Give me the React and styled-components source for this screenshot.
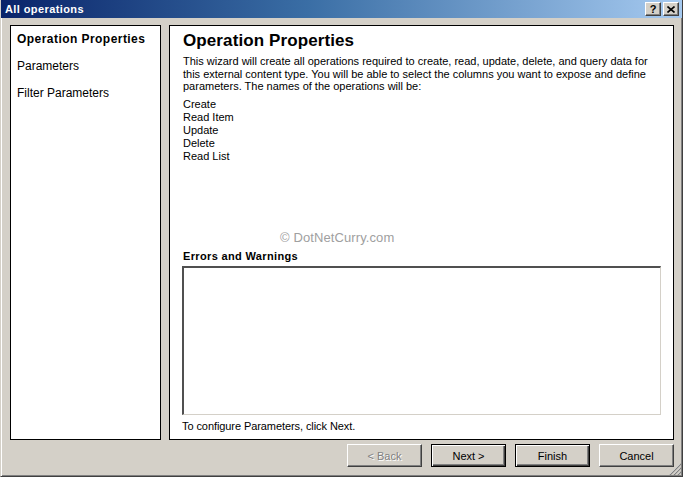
import React from "react";
import styled, { createGlobalStyle, css } from "styled-components";

const Global = createGlobalStyle`
  html, body { margin: 0; padding: 0; background: #d4d0c8; }
  body { font-family: "Liberation Sans", Arial, sans-serif; font-size: 11px; color: #000; }
  * { box-sizing: border-box; }
`;

const Window = styled.div`
  width: 683px;
  height: 477px;
  background: #d4d0c8;
  display: flex;
  flex-direction: column;
  border-left: 1px solid #d4d0c8;
  border-bottom: 1px solid #404040;
  border-right: 1px solid #404040;
  box-shadow: inset 1px 0 0 #ffffff, inset 0 -1px 0 #808080, inset -1px 0 0 #808080;
  position: relative;
  overflow: hidden;
`;

const TitleBar = styled.div`
  height: 18px;
  display: flex;
  align-items: center;
  padding: 0 3px 0 4px;
  background: linear-gradient(to right, #0a246a 0%, #3a6ea5 45%, #a6caf0 100%);
  flex-shrink: 0;
`;

const Title = styled.div`
  flex: 1;
  color: #fff;
  font-weight: bold;
  font-size: 11px;
  letter-spacing: 0.4px;
  font-family: "Liberation Sans", Arial, sans-serif;
`;

const CaptionButton = styled.div`
  width: 16px;
  height: 14px;
  margin-left: 2px;
  background: #d4d0c8;
  border-top: 1px solid #fff;
  border-left: 1px solid #fff;
  border-right: 1px solid #404040;
  border-bottom: 1px solid #404040;
  box-shadow: inset -1px -1px 0 #808080;
  display: flex;
  align-items: center;
  justify-content: center;
  font-weight: bold;
  font-size: 11px;
  line-height: 1;
`;

const Body = styled.div`
  display: flex;
  gap: 8px;
  padding: 7px 8px 0 9px;
  height: 422px;
  flex-shrink: 0;
`;

const NavPanel = styled.div`
  width: 151px;
  background: #fff;
  border: 1px solid #000;
  padding: 6px 0 0 6px;
  display: flex;
  flex-direction: column;
  gap: 13px;
`;

const NavItem = styled.div`
  font-family: "Liberation Sans", Arial, sans-serif;
  font-size: 12px;
  line-height: 14px;
  ${(p) =>
    p.$active &&
    css`
      font-weight: bold;
      letter-spacing: 0.45px;
    `}
`;

const Content = styled.div`
  flex: 1;
  background: #fff;
  border: 1px solid #000;
  padding: 5px 12px 0 12px;
  display: flex;
  flex-direction: column;
`;

const Heading = styled.div`
  font-weight: bold;
  font-size: 17px;
  line-height: 20px;
  margin-left: 1px;
  letter-spacing: 0.1px;
`;

const Para = styled.div`
  font-size: 11px;
  line-height: 12.5px;
  margin: 4px 0 0 1px;
  white-space: nowrap;
`;

const OpList = styled.div`
  margin-top: 5px;
  margin-left: 1px;
  font-size: 11px;
  line-height: 13px;
`;

const Spacer = styled.div`
  flex: 1;
  display: flex;
  align-items: flex-end;
  justify-content: flex-start;
  padding-left: 98px;
  padding-bottom: 5px;
`;

const Watermark = styled.div`
  color: #a0a0a0;
  font-size: 13px;
  line-height: 15px;
  letter-spacing: 0.1px;
`;

const SectionLabel = styled.div`
  font-weight: bold;
  font-size: 11px;
  line-height: 13px;
  margin-left: 1px;
  letter-spacing: 0.35px;
`;

const TextBox = styled.div`
  height: 149px;
  margin-top: 3px;
  background: #fff;
  border-top: 2px solid #505050;
  border-left: 2px solid #505050;
  border-right: 1px solid #d4d0c8;
  border-bottom: 1px solid #d4d0c8;
`;

const Hint = styled.div`
  font-size: 11px;
  line-height: 13px;
  margin: 5px 0 0 0;
  padding-bottom: 6px;
  letter-spacing: -0.08px;
`;

const Footer = styled.div`
  display: flex;
  justify-content: flex-end;
  gap: 9px;
  padding: 4px 8px 0 0;
`;

const Button = styled.div`
  width: 75px;
  height: 23px;
  display: flex;
  align-items: center;
  justify-content: center;
  background: #d4d0c8;
  font-size: 11px;
  border-top: 1px solid #fff;
  border-left: 1px solid #fff;
  border-right: 1px solid #404040;
  border-bottom: 1px solid #404040;
  box-shadow: inset -1px -1px 0 #808080;
  ${(p) =>
    p.$strong &&
    css`
      border: 1px solid #000;
      box-shadow: inset 1px 1px 0 #fff, inset -1px -1px 0 #404040, inset -2px -2px 0 #808080;
    `}
  ${(p) =>
    p.$disabled &&
    css`
      color: #808080;
      text-shadow: 1px 1px 0 #fff;
    `}
`;

const Grip = styled.svg`
  position: absolute;
  right: 1px;
  bottom: 1px;
`;

export default function App() {
  return (
    <>
      <Global />
      <Window>
        <TitleBar>
          <Title>All operations</Title>
          <CaptionButton>?</CaptionButton>
          <CaptionButton>
            <svg width="8" height="7" viewBox="0 0 8 7">
              <path d="M0.5 0.5 L7.5 6.5 M7.5 0.5 L0.5 6.5" stroke="#000" strokeWidth="1.6" />
            </svg>
          </CaptionButton>
        </TitleBar>
        <Body>
          <NavPanel>
            <NavItem $active>Operation Properties</NavItem>
            <NavItem>Parameters</NavItem>
            <NavItem>Filter Parameters</NavItem>
          </NavPanel>
          <Content>
            <Heading>Operation Properties</Heading>
            <Para>
              This wizard will create all operations required to create, read, update, delete, and query data for
              <br />
              this external content type. You will be able to select the columns you want to expose and define
              <br />
              parameters. The names of the operations will be:
            </Para>
            <OpList>
              <div>Create</div>
              <div>Read Item</div>
              <div>Update</div>
              <div>Delete</div>
              <div>Read List</div>
            </OpList>
            <Spacer>
              <Watermark>© DotNetCurry.com</Watermark>
            </Spacer>
            <SectionLabel>Errors and Warnings</SectionLabel>
            <TextBox />
            <Hint>To configure Parameters, click Next.</Hint>
          </Content>
        </Body>
        <Footer>
          <Button $disabled>&lt; Back</Button>
          <Button $strong>Next &gt;</Button>
          <Button $strong>Finish</Button>
          <Button>Cancel</Button>
        </Footer>
        <Grip width="12" height="12" viewBox="0 0 12 12">
          <path d="M11 1 L1 11 M11 5 L5 11 M11 9 L9 11" stroke="#fff" strokeWidth="1" />
          <path d="M12 1 L1 12 M12 5 L5 12 M12 9 L9 12" stroke="#808080" strokeWidth="1.2" />
        </Grip>
      </Window>
    </>
  );
}
